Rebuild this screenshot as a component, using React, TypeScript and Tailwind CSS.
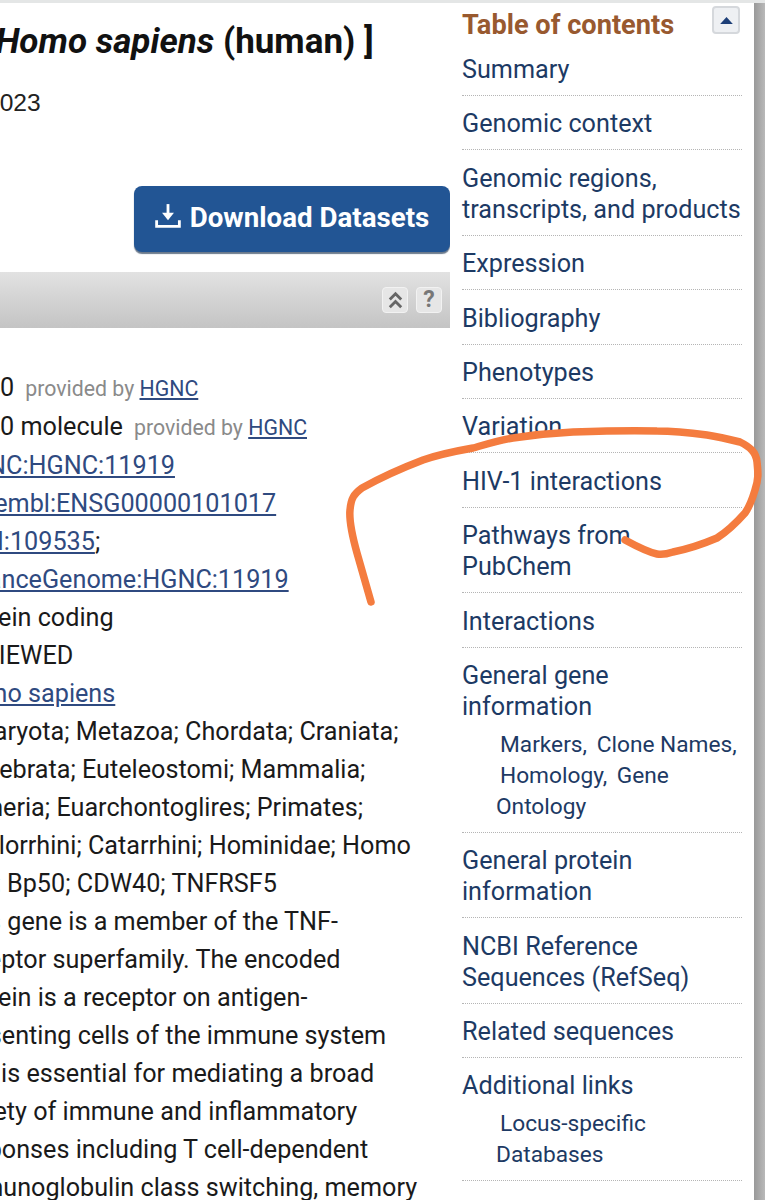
const tocItems: { label: string[]; sub?: string[] }[] = [
  { label: ['Summary'] },
  { label: ['Genomic context'] },
  { label: ['Genomic regions,', 'transcripts, and products'] },
  { label: ['Expression'] },
  { label: ['Bibliography'] },
  { label: ['Phenotypes'] },
  { label: ['Variation'] },
  { label: ['HIV-1 interactions'] },
  { label: ['Pathways from', 'PubChem'] },
  { label: ['Interactions'] },
  { label: ['General gene', 'information'], sub: ['Markers,', 'Clone Names,', 'Homology,', 'Gene Ontology'] },
  { label: ['General protein', 'information'] },
  { label: ['NCBI Reference', 'Sequences (RefSeq)'] },
  { label: ['Related sequences'] },
  { label: ['Additional links'], sub: ['Locus-specific Databases'] },
];

const Provided = ({ className }: { className: string }) => (
  <span className={`text-[21.3px] text-[#8a8a8a] ${className}`}>
    provided by <a className="text-[#2f4a80] underline">HGNC</a>
  </span>
);

const Link = ({ children }: { children: React.ReactNode }) => (
  <a className="text-[#2f4a80] underline underline-offset-2">{children}</a>
);

export default function App() {
  return (
    <div className="relative h-[1200px] w-[765px] overflow-hidden bg-white font-['Roboto',sans-serif]">
      <div className="flex h-full border-t-[3px] border-[#e4e6e6]">
        {/* Main column, cut off on the left */}
        <div className="w-[450px] shrink-0 overflow-hidden">
          <h1 className="mt-[18px] ml-[-23px] whitespace-nowrap text-[35px] leading-[42px] font-bold text-[#111]">
            [ <i>Homo sapiens</i> (human) ]
          </h1>
          <p className="mt-[25px] ml-[-14px] text-[24.6px] leading-[30px] font-['Liberation_Sans',sans-serif] text-[#222]">2023</p>

          <div className="mt-[68px] flex justify-end">
            <button className="flex h-[66px] w-[316px] items-center justify-center gap-[9px] rounded-lg bg-[#225594] pb-[2px] text-[27.7px] font-bold text-white shadow-[0_2px_1px_#6b7a8c]">
              <svg viewBox="0 0 24 24" width="26" height="26" fill="none" stroke="currentColor" strokeWidth="2.6" className="mb-[4px]">
                <path d="M12 1v11" />
                <path d="M6.5 9h11L12 16z" fill="currentColor" stroke="none" />
                <path d="M1.5 16v5.5h21V16" />
              </svg>
              Download Datasets
            </button>
          </div>

          <div className="mt-[20px] flex h-[56px] items-center justify-end gap-[8px] bg-gradient-to-b from-[#e2e2e2] to-[#c4c4c4] pr-[8px]">
            <span className="flex h-[26px] w-[26px] items-center justify-center rounded-[4px] border border-[#f2f2f2] bg-[#e6e6e6]">
              <svg viewBox="0 0 20 20" width="19" height="19" fill="none" stroke="#666" strokeWidth="3">
                <path d="M4 9l6-6 6 6M4 17l6-6 6 6" />
              </svg>
            </span>
            <span className="flex h-[26px] w-[26px] items-center justify-center rounded-[4px] border border-[#f2f2f2] bg-[#e6e6e6] text-[23px] font-bold text-[#777]">
              ?
            </span>
          </div>

          <div className="mt-[41px] ml-[-47px] w-[600px] whitespace-nowrap text-[25.2px] leading-[38px] text-[#1a1a1a]">
            <div>CD40<Provided className="ml-[11px]" /></div>
            <div>CD40 molecule<Provided className="ml-[11px]" /></div>
            <div><Link>HGNC:HGNC:11919</Link></div>
            <div><Link>Ensembl:ENSG00000101017</Link></div>
            <div><Link>MIM:109535</Link>;</div>
            <div><Link>AllianceGenome:HGNC:11919</Link></div>
            <div>protein coding</div>
            <div>REVIEWED</div>
            <div><Link>Homo sapiens</Link></div>
            <div>Eukaryota; Metazoa; Chordata; Craniata;</div>
            <div>Vertebrata; Euteleostomi; Mammalia;</div>
            <div>Eutheria; Euarchontoglires; Primates;</div>
            <div>Haplorrhini; Catarrhini; Hominidae; Homo</div>
            <div>p50; Bp50; CDW40; TNFRSF5</div>
            <div>This gene is a member of the TNF-</div>
            <div>receptor superfamily. The encoded</div>
            <div>protein is a receptor on antigen-</div>
            <div>presenting cells of the immune system</div>
            <div>and is essential for mediating a broad</div>
            <div>variety of immune and inflammatory</div>
            <div>responses including T cell-dependent</div>
            <div>immunoglobulin class switching, memory</div>
          </div>
        </div>

        {/* Table of contents */}
        <nav className="w-[304px] shrink-0 pr-[12px] pl-[12px] text-[25.2px] leading-[31px] text-[#1d3a64]">
          <div className="relative">
            <h2 className="pt-[6px] pb-[8px] text-[27.2px] leading-[32px] font-bold text-[#98592f]">Table of contents</h2>
            <span className="absolute top-[3px] right-[2px] flex h-[28px] w-[28px] items-center justify-center rounded-[4px] border-2 border-[#d5d8dc] bg-[#eef0f3]">
              <svg viewBox="0 0 16 10" width="15" height="9"><path d="M8 1l7 8H1z" fill="#1d3f78" /></svg>
            </span>
          </div>
          {tocItems.map(item => (
            <div key={item.label[0]} className="mb-[7.4px] border-b border-dotted border-[#b5b5b5] pt-[5px] pb-[10px]">
              {item.label.map(l => <div key={l} className="whitespace-nowrap">{l}</div>)}
              {item.sub && (
                <div className="mt-[7px] pl-[34px] text-[22.7px]">
                  {item.sub.map(s => <span key={s} className="ml-[4px]">{s} </span>)}
                </div>
              )}
            </div>
          ))}
        </nav>

        <div className="flex-1 bg-gradient-to-r from-[#999] to-[#b9b9b9]" />
      </div>

      {/* Hand drawn marker */}
      <svg className="absolute inset-0 pointer-events-none" width="765" height="1200" fill="none">
        <path
          d="M371 602C366 585 362 570 357 553C352 535 349 520 350 510C351 498 354 494 362 488C380 478 402 468 423 460C440 454 456 451 473 448C487 444 500 440 513 438C533 435 553 433 573 432C600 431 630 430 657 431C675 431 692 433 707 435C720 437 732 440 740 442C750 447 756 452 757 462C758 472 759 478 755 490C752 500 750 506 745 513C737 522 728 531 717 538C703 544 688 549 673 552C667 554 662 555 657 554C648 552 636 546 625 540"
          stroke="#f47c3f"
          strokeWidth="7.5"
          strokeLinecap="round"
          strokeLinejoin="round"
        />
      </svg>
    </div>
  );
}
